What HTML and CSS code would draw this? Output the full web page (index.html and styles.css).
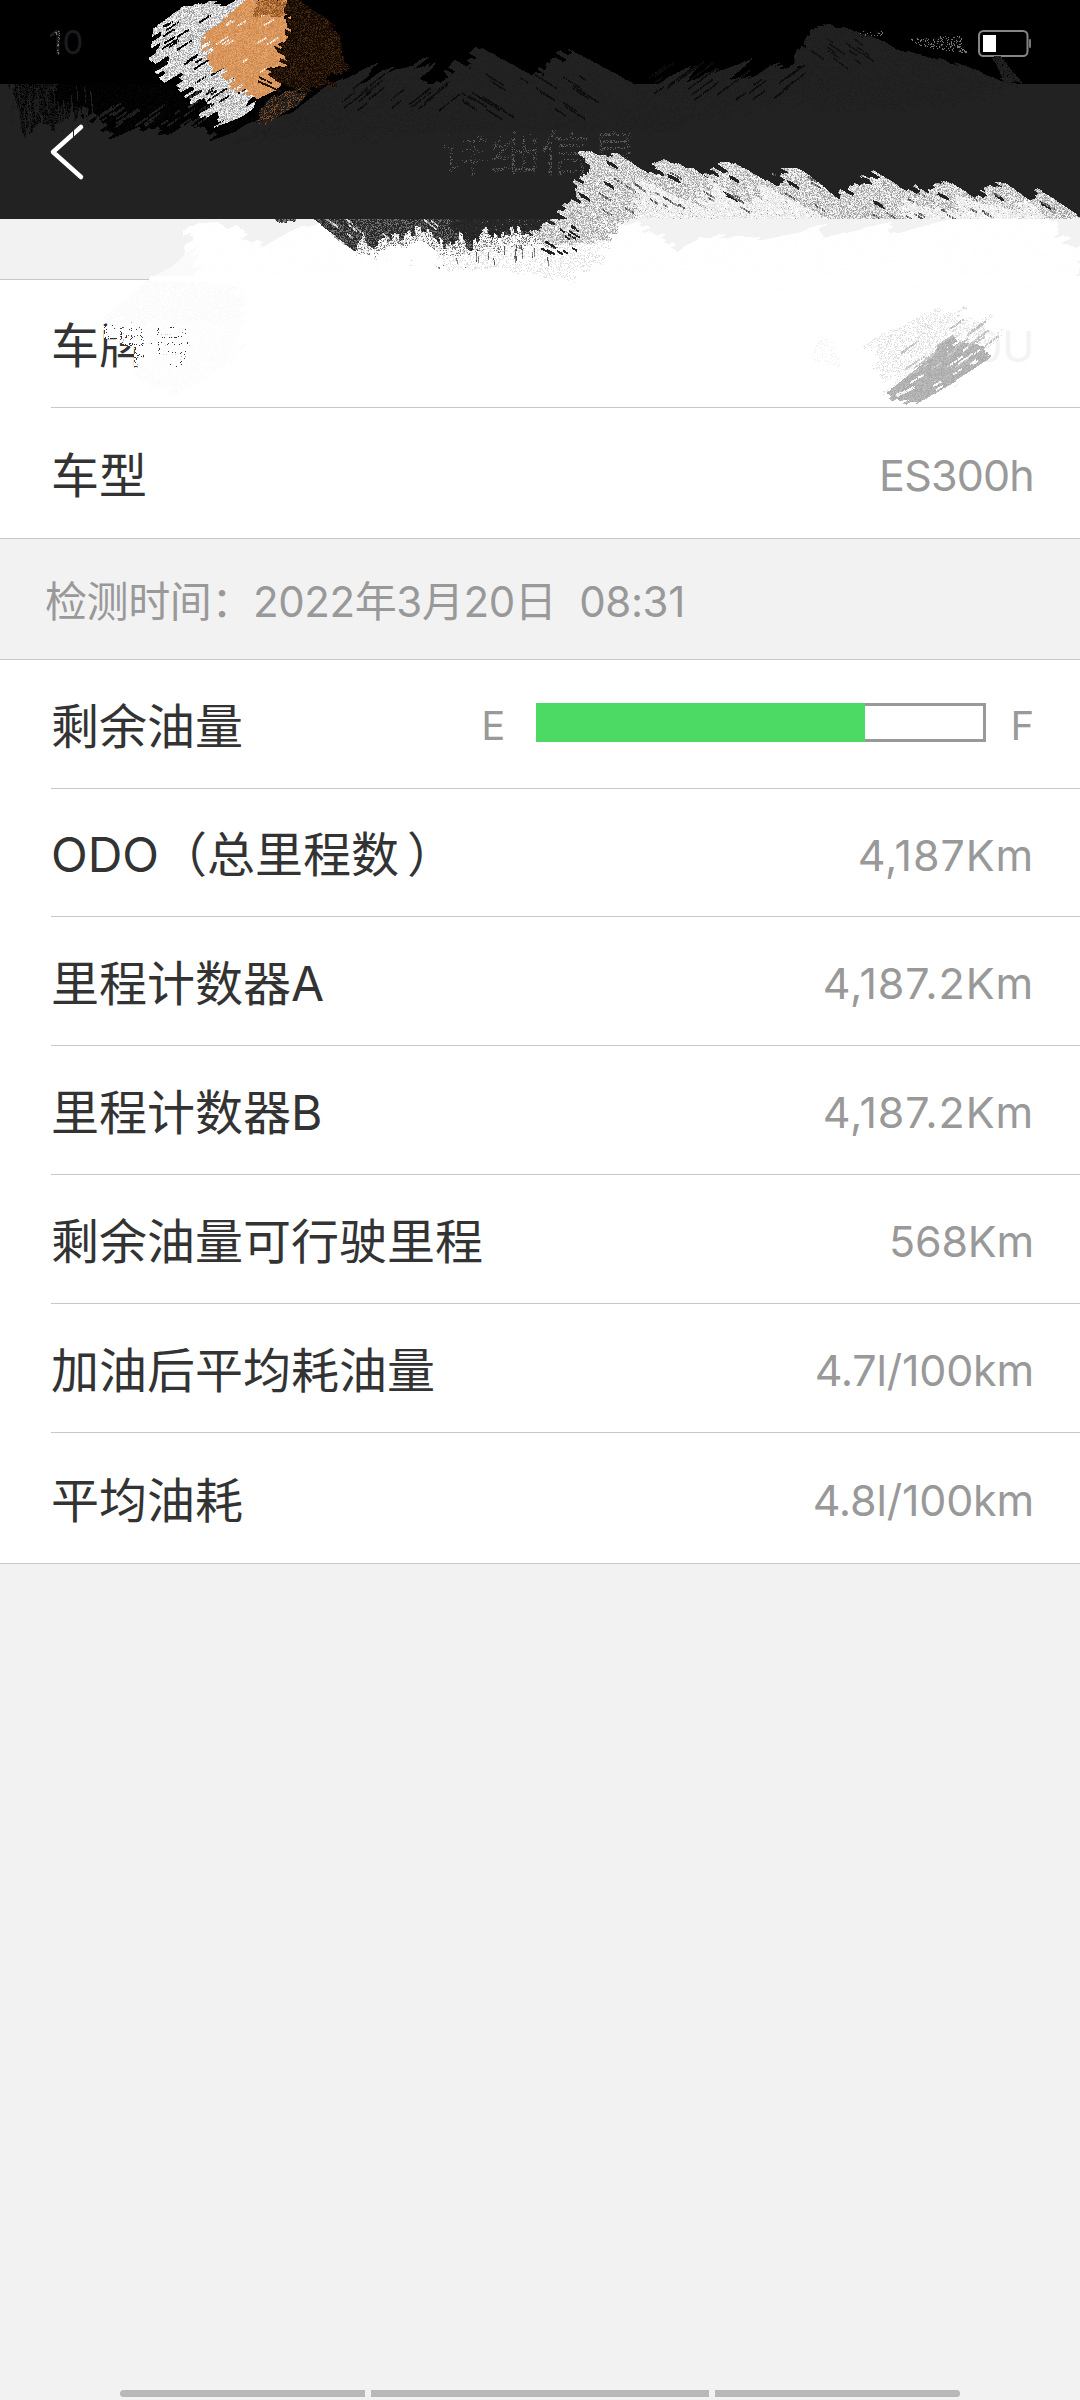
FILE: index.html
```html
<!DOCTYPE html>
<html lang="zh-CN">
<head>
<meta charset="utf-8">
<title>详细信息</title>
<link rel="stylesheet" href="styles.css">
</head>
<body>
<div class="screen">
  <header class="top">
    <div class="status">
      <span class="clock">10</span>
      <svg class="battery" width="56" height="30" viewBox="0 0 56 30">
        <rect x="2" y="3" width="48.500" height="25" rx="4.500" fill="#000" stroke="#858585" stroke-width="2"/>
        <rect x="6" y="7" width="13" height="17" fill="#fff"/>
        <rect x="52" y="11" width="2" height="9" rx="1" fill="#777"/>
      </svg>
    </div>
    <div class="titlebar">
      <svg class="back" width="40" height="60" viewBox="0 0 40 60"><path d="M32 5 4 30 32 55" fill="none" stroke="#fff" stroke-width="4.500" stroke-linecap="round" stroke-linejoin="round"/></svg>
      <h1 class="title">详细信息</h1>
    </div>
  </header>
  <main>
    <section class="group vehicle">
      <div class="row first"><span class="label">车牌号</span><span class="value plate">0U</span></div>
      <div class="row last"><span class="label">车型</span><span class="value model">ES300h</span></div>
    </section>
    <p class="checked">检测时间：2022年3月20日&nbsp; 08:31</p>
    <section class="group">
      <div class="row"><span class="label">剩余油量</span>
        <div class="fuel"><span>E</span><div class="gauge"><div class="level"></div></div><span>F</span></div>
      </div>
      <div class="row short"><span class="label">ODO（总里程数<span class="close">）</span></span><span class="value distance">4,187Km</span></div>
      <div class="row"><span class="label">里程计数器A</span><span class="value distance">4,187.2Km</span></div>
      <div class="row"><span class="label">里程计数器B</span><span class="value distance">4,187.2Km</span></div>
      <div class="row"><span class="label">剩余油量可行驶里程</span><span class="value">568Km</span></div>
      <div class="row"><span class="label">加油后平均耗油量</span><span class="value">4.7l/100km</span></div>
      <div class="row last"><span class="label">平均油耗</span><span class="value">4.8l/100km</span></div>
    </section>
  </main>
  <footer class="nav"><i></i><i class="mid"></i><i></i></footer>
  <canvas class="brush" id="brush" width="1080" height="420"></canvas>
</div>
<script src="brush.js"></script>
</body>
</html>
```
FILE: styles.css
```css
* { box-sizing: border-box; }
body { margin: 0; background: #f2f2f2; font-family: Inter, "Noto Sans CJK SC", sans-serif; }
.screen { position: relative; width: 1080px; height: 2400px; display: flex; flex-direction: column; overflow: hidden; }
.top { height: 219px; background: #222; color: #fff; }
.status { height: 84px; background: #000; display: flex; justify-content: space-between; padding: 28px 47px 0 49px; }
.clock { font-size: 33px; line-height: 28px; color: #1c1c1c; }
.titlebar { height: 135px; display: grid; grid-template-columns: 1fr auto 1fr; align-items: center; padding: 0 49px; }
.title { margin: 0; padding-top: 3px; font-size: 50px; font-weight: 400; line-height: 60px; color: #5a5a5a; }
main { padding-top: 60px; }
.group { background: #fff; border-top: 1px solid #c8c8c8; border-bottom: 1px solid #c8c8c8; padding-left: 51px; }
.row { height: 129px; border-bottom: 1px solid #c8c8c8; padding-right: 46px; display: flex; align-items: center; justify-content: space-between; }
.row.first, .row.short { height: 128px; }
.row.last { height: 130px; border-bottom: 0; }
.label { padding-top: 5px; font-size: 48px; line-height: 60px; color: #333; }
.close { margin-left: 8px; }
.value { padding-top: 4px; font-size: 43px; line-height: 60px; letter-spacing: -0.2px; color: #999; }
.model { letter-spacing: -0.8px; }
.distance { letter-spacing: 0.9px; }
.plate { color: #f3f3f3; }
.checked { margin: 0; height: 120px; padding: 3px 0 0 45px; font-size: 42px; line-height: 120px; letter-spacing: -0.4px; color: #999; white-space: pre; }
.fuel { display: flex; align-items: center; font-size: 40px; line-height: 60px; color: #999; margin-right: 0; }
.fuel span { padding-top: 3px; }
.gauge { width: 450px; height: 39px; margin: 0 24px 3px 31px; border: 3px solid #999; }
.level { width: 329px; height: 39px; margin: -3px 0 0 -3px; background: #4cd964; }
.nav { margin-top: auto; height: 10px; display: flex; gap: 6px; padding: 0 120px 3px; }
.nav i { flex: 245; background: #b8b8b8; border-radius: 4px 0 0 4px; }
.nav .mid { flex: 338; border-radius: 0; }
.nav i:last-child { border-radius: 0 4px 4px 0; }
.brush { position: absolute; left: 0; top: 0; pointer-events: none; }
```
FILE: brush.js
```javascript
// Dry-brush strokes: each area is filled with slanted bristles whose ends vary.
const ctx = document.getElementById('brush').getContext('2d');
let seed = 7;
function rnd() {
  seed = (seed * 1664525 + 1013904223) % 4294967296;
  return seed / 4294967296;
}
function brush(points, degrees, colors, ends, cover) {
  const a = degrees * Math.PI / 180, c = Math.cos(a), s = Math.sin(a);
  const p = points.map(([x, y]) => [x * c + y * s, y * c - x * s]);
  const low = Math.min(...p.map(q => q[1])), high = Math.max(...p.map(q => q[1]));
  let left = 0, right = 0, wait = 0;
  for (let v = low; v < high; v += 0.7) {
    if (wait-- <= 0) {
      wait = 2 + rnd() * 4;
      left = (rnd() - 0.5) * ends;
      right = (rnd() - 0.5) * ends;
    }
    const cuts = [];
    p.forEach((q, i) => {
      const r = p[(i + 1) % p.length];
      if ((q[1] <= v) !== (r[1] <= v)) cuts.push(q[0] + (v - q[1]) * (r[0] - q[0]) / (r[1] - q[1]));
    });
    cuts.sort((m, n) => m - n);
    for (let i = 0; i + 1 < cuts.length; i += 2) {
      for (let u = cuts[i] + left; u < cuts[i + 1] + right; u += 0.7) {
        if (rnd() > cover) continue;
        ctx.fillStyle = colors[Math.floor(rnd() * colors.length)];
        ctx.fillRect(Math.round(u * c - v * s), Math.round(u * s + v * c), 1, 1);
      }
    }
  }
}
// Thin loose bristles scattered over a box.
function streaks(x, y, w, h, degrees, colors, count, length) {
  const a = degrees * Math.PI / 180;
  for (let i = 0; i < count; i++) {
    const px = x + rnd() * w, py = y + rnd() * h, l = length * (0.4 + rnd());
    for (let u = 0; u < l; u += 0.8) {
      if (rnd() > 0.85) continue;
      ctx.fillStyle = colors[Math.floor(rnd() * colors.length)];
      ctx.fillRect(Math.round(px + u * Math.cos(a)), Math.round(py + u * Math.sin(a)), 1, 2);
    }
  }
}
function within(x, y, w, h, draw) {
  ctx.save();
  ctx.beginPath();
  ctx.rect(x, y, w, h);
  ctx.clip();
  draw();
  ctx.restore();
}
const silver = ['#fff', '#ddd', '#c5c9cc', '#999', '#eee', '#b5b5b5'];

// black over the title bar
within(0, 84, 400, 60, () => {
  brush([[8, 80], [90, 80], [78, 112], [60, 128], [38, 120], [24, 130]], 88, ['#000', '#111', '#1a1a1a'], 16, 1);
  brush([[50, 78], [390, 78], [330, 105], [255, 122], [215, 137], [190, 121], [170, 133], [140, 124], [115, 135], [85, 112], [60, 104]], -35, ['#000', '#000', '#060606'], 14, 1);
  streaks(10, 84, 85, 25, 85, ['#222', '#1b1b1b'], 30, 22);
  streaks(95, 110, 120, 16, -35, ['#222', '#1b1b1b'], 26, 15);
});
// charcoal over the status bar
brush([[235, 140], [285, 117], [320, 90], [370, 68], [365, 78], [400, 67], [432, 60], [420, 78], [438, 84], [460, 68], [560, 84], [620, 90], [650, 86], [698, 61], [680, 84], [748, 61], [725, 82], [780, 64], [808, 62], [805, 100], [650, 130], [400, 138]], -36, ['#222', '#222', '#1e1e1e'], 24, 1);
brush([[450, 74], [482, 48], [540, 80], [552, 62], [572, 51], [650, 92], [610, 130], [480, 120]], 32, ['#222', '#222', '#1f1f1f'], 18, 1);
brush([[790, 90], [800, 58], [812, 26], [843, 26], [885, 44], [935, 58], [1022, 85], [960, 105], [820, 110]], 35, ['#222', '#222', '#1e1e1e'], 14, 1);
brush([[992, 58], [1002, 58], [1022, 84], [1005, 84]], 40, ['#222', '#1b1b1b'], 8, 0.8);
streaks(340, 85, 100, 25, -38, ['#0a0a0a', '#111'], 18, 22);
streaks(455, 70, 130, 40, 32, ['#111', '#0c0c0c'], 24, 20);
streaks(640, 75, 150, 25, -36, ['#0a0a0a', '#111'], 24, 24);
streaks(810, 35, 60, 30, 35, ['#111'], 12, 14);
brush([[858, 31], [882, 31], [882, 36], [860, 37]], 10, ['#000', '#111', '#777'], 2, 0.35);
brush([[910, 38], [960, 36], [968, 54], [945, 50], [915, 44]], 20, ['#000', '#111', '#000', '#777'], 5, 0.6);

// silver, copper and umber patch
brush([[192, 0], [158, 25], [155, 55], [172, 78], [197, 96], [213, 125], [245, 113], [265, 80], [265, 0]], -32, silver, 22, 1);
streaks(155, 12, 45, 60, -32, ['#000', '#111'], 16, 14);
streaks(185, 70, 55, 40, -32, ['#000', '#333'], 16, 14);
brush([[245, 0], [290, 0], [290, 60], [280, 88], [252, 101], [232, 82], [207, 62], [208, 32]], -30, ['#dd995e', '#d79257', '#e3a46d', '#cb874c'], 16, 1);
streaks(212, 12, 60, 70, -32, ['#eee', '#e8bd96'], 14, 12);
brush([[252, 0], [290, 0], [287, 15], [255, 15]], -25, ['#a5642e', '#8b5226', '#c27f46'], 10, 0.8);
brush([[289, 0], [306, 3], [332, 24], [344, 42], [344, 62], [328, 85], [300, 90], [275, 80], [262, 70], [285, 62], [275, 45], [287, 35]], 25, ['#160c04', '#241508', '#442711', '#100803'], 14, 1);
streaks(256, 72, 24, 12, 25, ['#20140a'], 4, 20);
brush([[275, 92], [310, 90], [298, 105], [263, 125], [258, 113]], -38, ['#222', '#222', '#7b4a24', '#2a1c13'], 16, 0.8);

// ghosts in the clock and the title
brush([[50, 35], [59, 29], [59, 54], [57, 54], [57, 34]], -35, ['#777', '#333', '#111'], 1, 0.5);
brush([[436, 130], [486, 130], [486, 186], [436, 186]], -35, ['#222'], 3, 0.62);
brush([[486, 130], [646, 130], [646, 186], [486, 186]], -35, ['#222'], 3, 0.5);

// white over the pale band
brush([[190, 224], [222, 223], [262, 247], [300, 226], [318, 224], [600, 224], [632, 222], [682, 250], [698, 235], [770, 237], [820, 226], [830, 236], [885, 224], [900, 232], [955, 216], [1032, 204], [1052, 219], [1062, 240], [1080, 246], [1080, 292], [190, 284], [186, 258]], -25, ['#fff', '#fefefe'], 14, 1);
brush([[190, 250], [200, 290], [135, 292], [148, 278], [168, 268]], -30, ['#fafafa', '#fbfbfb'], 14, 1);
within(150, 276, 930, 7, () => brush([[150, 270], [1090, 260], [1090, 292], [150, 288]], 0, ['#fff'], 0, 1));

// charcoal and silver below the title bar
within(0, 219, 1080, 80, () => {
  brush([[270, 216], [296, 216], [293, 221], [278, 221]], 30, ['#333', '#777'], 4, 1);
  brush([[308, 214], [590, 214], [565, 236], [535, 237], [500, 238], [470, 250], [430, 247], [390, 248], [350, 248]], 36, ['#222', '#333', '#555', '#292929', '#777'], 12, 1);
  brush([[450, 214], [570, 214], [550, 232], [510, 229], [470, 242], [450, 228]], 36, ['#222', '#2b2b2b'], 8, 0.8);
  streaks(320, 217, 130, 20, 38, ['#ddd', '#999'], 10, 14);
  brush([[355, 251], [363, 235], [372, 250], [387, 239], [415, 231], [431, 230], [443, 247], [460, 236], [468, 250], [486, 232], [498, 240], [512, 228], [522, 232], [547, 231], [560, 241], [575, 248], [585, 262], [430, 264]], 86, ['#fff', '#eee', '#ccc', '#fff', '#777'], 11, 0.95);
  brush([[375, 250], [425, 243], [450, 264], [380, 266]], 32, ['#fff'], 8, 0.95);
  brush([[440, 255], [550, 246], [612, 235], [600, 258], [565, 281], [500, 267], [440, 270]], 32, ['#fff', '#fff', '#fff', '#e0e0e0'], 14, 1);
  streaks(440, 240, 110, 18, 86, ['#555', '#888'], 14, 9);
  brush([[530, 232], [570, 216], [625, 216], [610, 239], [572, 242], [545, 243]], 32, silver, 12, 1);
  streaks(538, 222, 35, 32, 32, ['#222'], 14, 9);
});
within(540, 145, 540, 74, () => {
  brush([[583, 154], [616, 152], [646, 172], [668, 162], [685, 163], [708, 178], [725, 166], [740, 166], [770, 183], [780, 170], [802, 171], [843, 204], [854, 180], [880, 174], [912, 195], [932, 181], [950, 182], [972, 196], [990, 183], [1007, 184], [1032, 202], [1045, 193], [1080, 216], [1080, 224], [556, 224], [578, 200], [573, 188], [580, 170]], 31, silver, 20, 1);
  brush([[637, 178], [700, 205], [710, 180], [755, 207], [760, 184], [830, 220], [638, 224]], 31, ['#fff', '#f3f3f3', '#ededed', '#ddd'], 15, 0.82);
  brush([[903, 200], [955, 214], [960, 197], [1015, 210], [1028, 202], [1050, 222], [903, 224]], 31, ['#fff', '#f3f3f3', '#eee', '#ddd'], 12, 0.82);
  for (const [x, y] of [[606, 162], [652, 169], [668, 176], [709, 171], [729, 177], [768, 174], [787, 182], [861, 178], [873, 202], [916, 185], [936, 193], [974, 185], [992, 194], [1040, 203], [602, 182], [725, 194], [578, 194]]) {
    brush([[x, y - 2], [x + 9, y + 2], [x + 12, y + 7], [x + 2, y + 2]], 31, ['#222'], 4, 1);
  }
  streaks(590, 170, 230, 40, 31, ['#555', '#999'], 26, 10);
  streaks(870, 190, 180, 26, 31, ['#555', '#999'], 18, 10);
});

// white smear over the plate label
brush([[105, 316], [148, 282], [235, 285], [245, 326], [105, 328]], -28, ['#fff', '#fcfcfc', '#fafafa'], 12, 0.9);
brush([[128, 362], [245, 345], [178, 393], [148, 382]], -28, ['#fcfcfc', '#fafafa'], 12, 0.35);
brush([[192, 320], [245, 320], [235, 360], [192, 385]], -28, ['#fff', '#fcfcfc'], 12, 0.9);
brush([[146, 322], [198, 322], [198, 378], [146, 378]], -28, ['#fff', '#fcfcfc'], 3, 0.72);
brush([[118, 326], [148, 326], [148, 366], [133, 366], [136, 348], [118, 340]], -28, ['#fff', '#fcfcfc'], 5, 0.6);
brush([[104, 326], [120, 326], [120, 338], [104, 338]], -28, ['#fff', '#fcfcfc'], 3, 0.7);

// grey scribble over the plate value
brush([[812, 350], [818, 336], [830, 337], [842, 365], [812, 363]], -50, ['#f3f3f3', '#fff', '#fff'], 3, 0.4);
brush([[868, 360], [868, 338], [900, 325], [935, 306], [984, 320], [997, 338], [982, 352], [935, 372], [892, 390], [888, 372]], -33, ['#fff', '#fff', '#eee', '#ddd', '#fff'], 22, 0.8);
brush([[888, 391], [925, 362], [934, 347], [950, 336], [960, 342], [986, 345], [988, 358], [945, 387], [915, 404], [898, 401]], -33, ['#b2b2b2', '#a9a9a9', '#bdbdbd'], 14, 0.97);
streaks(900, 345, 60, 30, -33, ['#ccc', '#bbb'], 12, 16);
streaks(950, 325, 35, 25, -35, ['#ccc', '#bbb'], 10, 16);
brush([[895, 394], [915, 385], [916, 387], [896, 397]], -30, ['#fff', '#eee'], 4, 0.8);
streaks(950, 345, 30, 20, -35, ['#fff', '#eee'], 6, 14);
streaks(905, 370, 50, 20, -33, ['#fff', '#eee'], 7, 8);
```
